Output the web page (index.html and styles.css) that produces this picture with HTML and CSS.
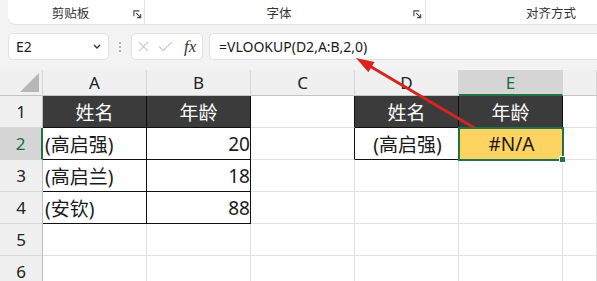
FILE: index.html
```html
<!DOCTYPE html>
<html lang="zh-CN">
<head>
    <meta charset="UTF-8">
    <meta name="viewport" content="width=device-width, initial-scale=1.0">
    <title>VLOOKUP #N/A</title>
    <link rel="stylesheet" href="styles.css">
</head>
<body>
    <div class="ribbon">
        <div class="group g-clip">
            <span class="group-label">剪贴板</span>
            <svg class="launcher" viewBox="0 0 10 10"><path d="M1 7V1h6M3.5 3.5l4.5 4.5M8.5 4.5v4h-4" fill="none" stroke="#444" stroke-width="1.2"/></svg>
        </div>
        <div class="group g-font">
            <span class="group-label">字体</span>
            <svg class="launcher" viewBox="0 0 10 10"><path d="M1 7V1h6M3.5 3.5l4.5 4.5M8.5 4.5v4h-4" fill="none" stroke="#444" stroke-width="1.2"/></svg>
        </div>
        <div class="group g-align">
            <span class="group-label">对齐方式</span>
        </div>
    </div>

    <div class="formula-row">
        <div class="namebox">
            <span>E2</span>
            <svg class="chevron" viewBox="0 0 8 5"><path d="M1 1l3 3 3-3" fill="none" stroke="#333" stroke-width="1.4"/></svg>
        </div>
        <div class="grip"><i></i><i></i><i></i></div>
        <div class="fxbox">
            <svg class="fx-icon" viewBox="0 0 12 12"><path d="M1 1l10 10M11 1L1 11" fill="none" stroke="#c9c9c9" stroke-width="1.3"/></svg>
            <svg class="fx-icon" viewBox="0 0 16 12"><path d="M1 6l4.5 4.5L15 1" fill="none" stroke="#c9c9c9" stroke-width="1.3"/></svg>
            <span class="fx">fx</span>
        </div>
        <div class="formula">=VLOOKUP(D2,A:B,2,0)</div>
    </div>

    <table class="sheet">
        <colgroup>
            <col class="c-head">
            <col class="c-col"><col class="c-col"><col class="c-col"><col class="c-col"><col class="c-col">
            <col>
        </colgroup>
        <tr class="col-heads">
            <th class="corner"><span class="tri"></span></th>
            <th>A</th><th>B</th><th>C</th><th>D</th><th class="active-col">E</th><th></th>
        </tr>
        <tr>
            <th class="row-head">1</th>
            <td class="box dark">姓名</td><td class="box dark">年龄</td><td class="edge"></td>
            <td class="box dark">姓名</td><td class="box dark">年龄</td><td></td>
        </tr>
        <tr>
            <th class="row-head active-row">2</th>
            <td class="box">(高启强)</td><td class="box num">20</td><td class="edge"></td>
            <td class="box mid">(高启强)</td><td class="box mid na">#N/A</td><td></td>
        </tr>
        <tr>
            <th class="row-head">3</th>
            <td class="box">(高启兰)</td><td class="box num">18</td><td></td>
            <td></td><td></td><td></td>
        </tr>
        <tr>
            <th class="row-head">4</th>
            <td class="box">(安钦)</td><td class="box num">88</td><td></td>
            <td></td><td></td><td></td>
        </tr>
        <tr>
            <th class="row-head">5</th>
            <td></td><td></td><td></td><td></td><td></td><td></td>
        </tr>
        <tr>
            <th class="row-head">6</th>
            <td></td><td></td><td></td><td></td><td></td><td></td>
        </tr>
    </table>

    <svg class="callout" viewBox="0 0 597 281">
        <line x1="478" y1="130" x2="368" y2="65" stroke="#d8241f" stroke-width="3"/>
        <polygon points="356,58 368.4,72.3 374.5,61.9" fill="#d8241f"/>
    </svg>
</body>
</html>
```

FILE: styles.css
```css
body {
    margin: 0;
    width: 597px;
    height: 281px;
    overflow: hidden;
    position: relative;
    background-color: #f3f3f3;
    font-family: "Noto Sans", "Noto Sans CJK SC", sans-serif;
    color: #1a1a1a;
}

/* ribbon group labels */
.ribbon {
    display: flex;
    height: 24px;
    margin-left: 8px;
    background: #fff;
    border-bottom-left-radius: 8px;
    box-shadow: 0 1px 0 #e2e2e2;
    overflow: hidden;
}
.group {
    display: flex;
    flex-shrink: 0;
    align-items: center;
    box-sizing: border-box;
    font-size: 12.5px;
    color: #333;
    border-right: 1px solid #e3e3e3;
}
.group-label {
    flex: 1;
    text-align: center;
}
.g-clip {
    width: 137px;
    padding-right: 2px;
}
.g-font {
    width: 281px;
    padding-right: 3px;
}
.g-align {
    width: 250px;
    border-right: none;
}
.launcher {
    width: 9px;
    height: 9px;
    margin-top: 4px;
}

/* name box + formula bar */
.formula-row {
    display: flex;
    align-items: center;
    height: 27px;
    margin-top: 9px;
    padding-left: 8px;
}
.namebox, .fxbox, .formula {
    box-sizing: border-box;
    height: 27px;
    background: #fff;
    border: 1px solid #e1e1e1;
    border-radius: 5px;
}
.namebox {
    width: 101px;
    display: flex;
    align-items: center;
    justify-content: space-between;
    padding: 0 7px 0 7px;
    font-size: 14px;
}
.chevron {
    width: 8px;
    height: 5px;
}
.grip {
    width: 22px;
    display: flex;
    flex-direction: column;
    align-items: center;
    gap: 2px;
}
.grip i {
    width: 2px;
    height: 2px;
    border-radius: 1px;
    background: #9c9c9c;
}
.fxbox {
    width: 72px;
    display: flex;
    align-items: center;
    padding-left: 6px;
    gap: 9px;
}
.fx-icon {
    height: 11px;
    width: 11px;
}
.fx-icon + .fx-icon {
    width: 15px;
}
.fx {
    font-family: "Liberation Serif", serif;
    font-style: italic;
    font-size: 17px;
    color: #333;
    margin-left: 2px;
}
.formula {
    flex: 1;
    margin-left: 6px;
    border-right: none;
    border-radius: 5px 0 0 5px;
    padding-left: 9px;
    font-size: 14px;
    line-height: 25px;
}

/* grid */
.sheet {
    margin-top: 10px;
    width: 597px;
    table-layout: fixed;
    border-collapse: separate;
    border-spacing: 0;
    background: #fff;
}
.c-head {
    width: 43px;
}
.c-col {
    width: 104px;
}
.sheet td, .sheet th {
    box-sizing: border-box;
    padding: 0;
    border-right: 1px solid #e0e0e0;
    border-bottom: 1px solid #e0e0e0;
    height: 32px;
    font-size: 19px;
    font-weight: normal;
    white-space: nowrap;
    overflow: hidden;
}
.col-heads th {
    height: 26px;
    font-size: 17px;
    background: #f0f0f0;
    border-right-color: #d6d6d6;
    border-bottom-color: #c4c4c4;
    color: #222;
}
.sheet .row-head {
    font-size: 17px;
    background: #f0f0f0;
    border-right-color: #bdbdbd;
    border-bottom-color: #d6d6d6;
    color: #222;
}
.corner {
    position: relative;
}
.tri {
    position: absolute;
    right: 3px;
    bottom: 3px;
    width: 0;
    height: 0;
    border-left: 19px solid transparent;
    border-bottom: 19px solid #b7b7b7;
}
.col-heads .active-col {
    background: #d5d5d5;
    color: #1d6b3f;
    border-bottom: 2px solid #217346;
}
.sheet .active-row {
    background: #d5d5d5;
    color: #1d6b3f;
    border-right: 2px solid #217346;
}

.sheet .box {
    border-right-color: #111;
    border-bottom-color: #111;
    padding-left: 2px;
}
.sheet .edge {
    border-right-color: #111;
}
.sheet .dark {
    background: #3b3b3b;
    color: #fff;
    text-align: center;
    padding-left: 0;
}
.num {
    text-align: right;
    padding-right: 4px;
}
.mid {
    text-align: center;
}
.sheet .na {
    position: relative;
    z-index: 1;
    background: #fdd462;
    outline: 2px solid #217346;
    outline-offset: -1px;
    overflow: visible;
}
.na::after {
    content: "";
    position: absolute;
    right: -4px;
    bottom: -4px;
    width: 5px;
    height: 5px;
    background: #217346;
    border: 1px solid #fff;
}

.callout {
    position: absolute;
    left: 0;
    top: 0;
    width: 597px;
    height: 281px;
    pointer-events: none;
}
```
